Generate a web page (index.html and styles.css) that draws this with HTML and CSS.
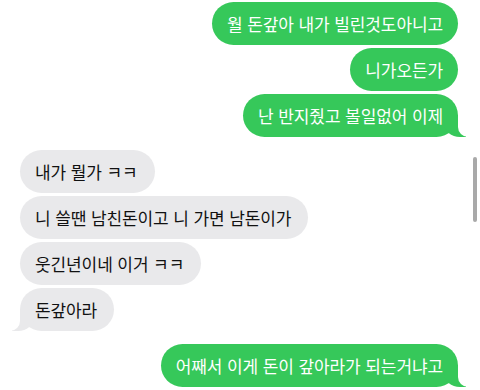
FILE: index.html
```html
<!DOCTYPE html>
<html lang="ko">
<head>
  <meta charset="UTF-8">
  <title>메시지</title>
  <link rel="stylesheet" href="styles.css">
</head>
<body>
  <div class="thread">
    <div class="msg sent">월 돈갚아 내가 빌린것도아니고</div>
    <div class="msg sent">니가오든가</div>
    <div class="msg sent tail">난 반지줬고 볼일없어 이제</div>

    <div class="msg recv group-start">내가 뭘가 ㅋㅋ</div>
    <div class="msg recv">니 쓸땐 남친돈이고 니 가면 남돈이가</div>
    <div class="msg recv">웃긴년이네 이거 ㅋㅋ</div>
    <div class="msg recv tail">돈갚아라</div>

    <div class="msg sent tail group-start">어째서 이게 돈이 갚아라가 되는거냐고</div>
  </div>
  <div class="scrollbar"></div>
</body>
</html>
```

FILE: styles.css
```css
:root {
  --green: #36c85a;
  --gray: #e9e9eb;
}

* { box-sizing: border-box; margin: 0; padding: 0; }
body {
  background: #fff;
  font-family: "Noto Sans CJK KR", "Noto Sans", sans-serif;
  width: 480px;
  height: 390px;
  overflow: hidden;
  position: relative;
}

.thread {
  display: flex;
  flex-direction: column;
  gap: 3px;
  padding: 2px 22px 0 20px;
}

/* Message bubbles */
.msg {
  position: relative;
  height: 43px;
  padding: 0 15px;
  border-radius: 22px;
  font-size: 17px;
  line-height: 43px;
  letter-spacing: -0.1px;
  white-space: nowrap;
}
.sent {
  align-self: flex-end;
  background: var(--green);
  color: #fff;
}
.recv {
  align-self: flex-start;
  background: var(--gray);
  color: #111;
  padding-right: 17px;
}
.group-start { margin-top: 10px; }

/* Bubble tails */
.tail::before,
.tail::after {
  content: '';
  position: absolute;
  bottom: 0;
  height: 22px;
}
.sent.tail::before {
  right: -8px;
  width: 22px;
  background: var(--green);
  border-bottom-left-radius: 16px 14px;
}
.sent.tail::after {
  right: -14px;
  width: 14px;
  background: #fff;
  border-bottom-left-radius: 10px;
}
.recv.tail::before {
  left: -8px;
  width: 22px;
  background: var(--gray);
  border-bottom-right-radius: 16px 14px;
}
.recv.tail::after {
  left: -14px;
  width: 14px;
  background: #fff;
  border-bottom-right-radius: 10px;
}

/* Scroll indicator */
.scrollbar {
  position: absolute;
  top: 157px;
  left: 473px;
  width: 4px;
  height: 65px;
  border-radius: 2px;
  background: #a9a9a9;
}
```
